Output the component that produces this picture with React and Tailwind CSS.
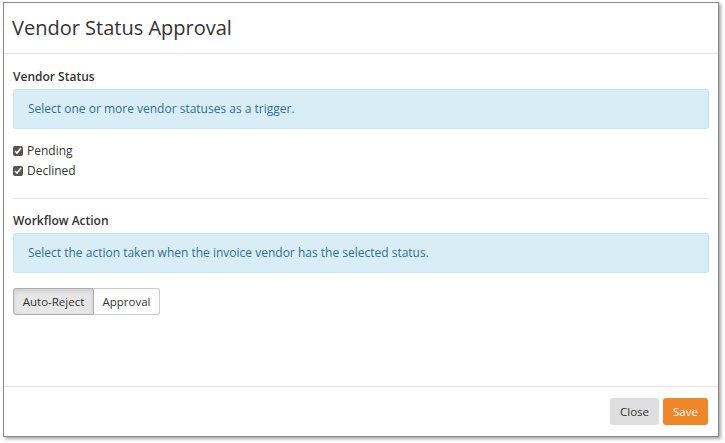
export default function App() {
  return (
    <div className="w-[725px] h-[443px] bg-white p-[2px_6px_6px_3px]" style={{ fontFamily: '"Open Sans", sans-serif' }}>
      <div className="w-[716px] h-[435px] border border-[#8a8a8a] shadow-[2px_2px_3px_rgba(0,0,0,0.35)] flex flex-col text-[#333]">
        <div className="h-[51px] border-b border-[#e5e5e5] px-[8px] flex items-center">
          <h1 className="text-[20px] leading-none text-[#333]">Vendor Status Approval</h1>
        </div>
        <div className="flex-1 px-[9px] pt-[15px]">
          <div className="text-[12px] font-semibold leading-[16px] mb-[4px]">Vendor Status</div>
          <div className="h-[40px] bg-[#d9edf7] border border-[#bce8f1] rounded-[3px] px-[14px] flex items-center text-[12px] text-[#31708f]">Select one or more vendor statuses as a trigger.</div>
          <div className="mt-[15px] flex flex-col gap-[6px] text-[12px]">
            <label className="flex items-center gap-[4px] h-[14px]"><input type="checkbox" defaultChecked className="w-[10px] h-[10px] accent-[#555]" />Pending</label>
            <label className="flex items-center gap-[4px] h-[14px]"><input type="checkbox" defaultChecked className="w-[10px] h-[10px] accent-[#555]" />Declined</label>
          </div>
          <div className="border-t border-[#e5e5e5] mt-[20px] mb-[14px]" />
          <div className="text-[12px] font-semibold leading-[16px] mb-[4px]">Workflow Action</div>
          <div className="h-[40px] bg-[#d9edf7] border border-[#bce8f1] rounded-[3px] px-[14px] flex items-center text-[12px] text-[#31708f]">Select the action taken when the invoice vendor has the selected status.</div>
          <div className="mt-[15px] flex text-[11.5px]">
            <button className="h-[27px] w-[81px] bg-[#e6e6e6] border border-[#adadad] rounded-l-[3px] shadow-[inset_0_2px_4px_rgba(0,0,0,0.12)]">Auto-Reject</button>
            <button className="h-[27px] w-[66px] bg-white border border-l-0 border-[#ccc] rounded-r-[3px]">Approval</button>
          </div>
        </div>
        <div className="h-[50px] border-t border-[#e5e5e5] flex items-center justify-end gap-[4px] pr-[10px] text-[11.5px]">
          <button className="h-[27px] w-[49px] bg-[#dedede] rounded-[3px] text-[#333]">Close</button>
          <button className="h-[27px] w-[45px] bg-[#f0862a] rounded-[3px] text-white">Save</button>
        </div>
      </div>
    </div>
  );
}
